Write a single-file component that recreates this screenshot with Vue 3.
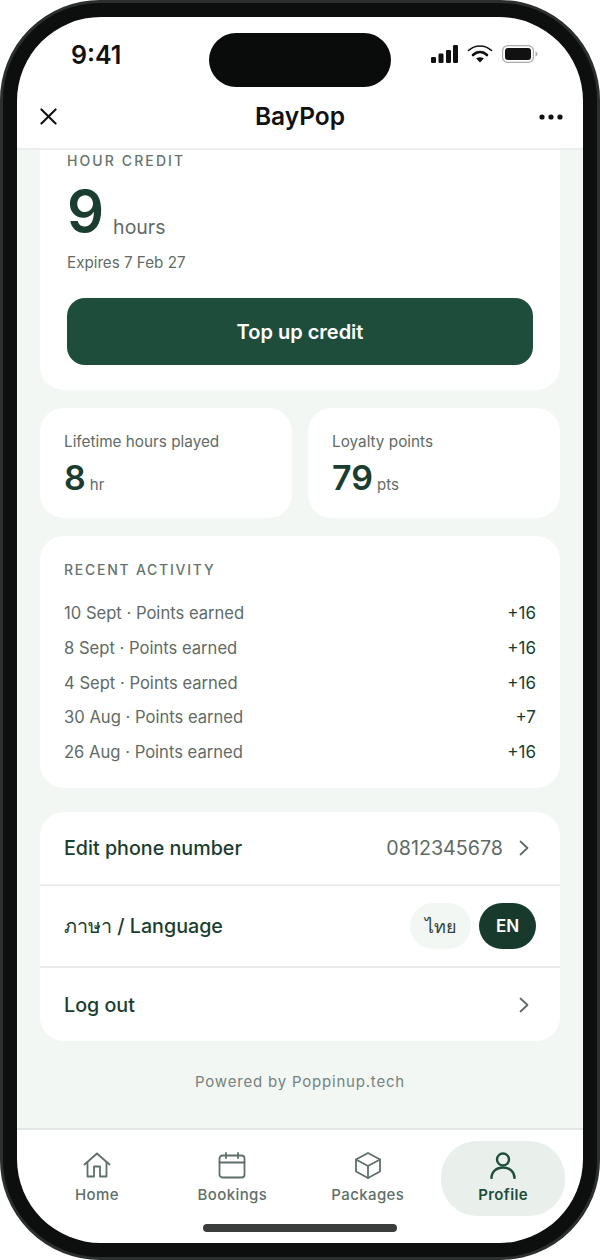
<script setup>
const activity = [
  { label: '10 Sept · Points earned', value: '+16' },
  { label: '8 Sept · Points earned', value: '+16' },
  { label: '4 Sept · Points earned', value: '+16' },
  { label: '30 Aug · Points earned', value: '+7' },
  { label: '26 Aug · Points earned', value: '+16' },
]
</script>

<template>
  <div class="phone">
    <div class="screen">
      <div class="island"></div>

      <div class="status-bar">
        <span class="time">9:41</span>
        <div class="status-icons">
          <svg width="27" height="18" viewBox="0 0 27 18" fill="#111">
            <rect x="0" y="12" width="5" height="6" rx="1.2" />
            <rect x="7.5" y="8.5" width="5" height="9.5" rx="1.2" />
            <rect x="15" y="5" width="5" height="13" rx="1.2" />
            <rect x="22" y="0" width="5" height="18" rx="1.2" />
          </svg>
          <svg width="26" height="18" viewBox="0 0 26 18" fill="none" stroke="#111" stroke-linecap="round">
            <path d="M1.5 5.5C8 -0.5 18 -0.5 24.5 5.5" stroke-width="1.6" />
            <path d="M6 10C10 6 16 6 20 10" stroke-width="2.6" />
            <path d="M13 17.5L9.2 13.4C11.5 11.7 14.5 11.7 16.8 13.4Z" fill="#111" stroke="none" />
          </svg>
          <svg width="36" height="18" viewBox="0 0 36 18" fill="none">
            <rect x="0.6" y="0.6" width="30.8" height="16.8" rx="5" stroke="#aaa" stroke-width="1.2" />
            <rect x="3" y="3" width="26" height="12" rx="3" fill="#111" />
            <path d="M33.5 6.5c1.4.4 2 1.4 2 2.5s-.6 2.1-2 2.5z" fill="#aaa" />
          </svg>
        </div>
      </div>

      <header class="top-bar">
        <svg class="close" width="17" height="17" viewBox="0 0 18 18" fill="none" stroke="#111" stroke-width="2.2" stroke-linecap="round">
          <path d="M1.5 1.5L16.5 16.5M16.5 1.5L1.5 16.5" />
        </svg>
        <h1>BayPop</h1>
        <svg class="more" width="24" height="6" viewBox="0 0 24 6" fill="#111">
          <circle cx="3" cy="3" r="2.6" />
          <circle cx="12" cy="3" r="2.6" />
          <circle cx="21" cy="3" r="2.6" />
        </svg>
      </header>

      <main class="content">
        <section class="card credit">
          <div class="eyebrow credit-title">HOUR CREDIT</div>
          <div class="credit-amount"><strong>9</strong><span>hours</span></div>
          <div class="expires">Expires 7 Feb 27</div>
          <button class="top-up">Top up credit</button>
        </section>

        <div class="stats">
          <section class="card stat">
            <div class="stat-label">Lifetime hours played</div>
            <div class="stat-value"><strong>8</strong><span>hr</span></div>
          </section>
          <section class="card stat">
            <div class="stat-label">Loyalty points</div>
            <div class="stat-value"><strong>79</strong><span>pts</span></div>
          </section>
        </div>

        <section class="card activity">
          <div class="eyebrow">RECENT ACTIVITY</div>
          <div class="activity-list">
            <div v-for="item in activity" :key="item.label" class="activity-row">
              <span>{{ item.label }}</span>
              <b>{{ item.value }}</b>
            </div>
          </div>
        </section>

        <section class="card settings">
          <div class="setting phone-row">
            <span class="setting-name">Edit phone number</span>
            <span class="setting-value">0812345678</span>
            <svg class="chevron" width="10" height="16" viewBox="0 0 10 16" fill="none" stroke="#5f6b66" stroke-width="1.8" stroke-linecap="round" stroke-linejoin="round">
              <path d="M1.5 1.5L8.5 8L1.5 14.5" />
            </svg>
          </div>
          <div class="setting lang-row">
            <span class="setting-name">ภาษา / Language</span>
            <div class="lang-switch">
              <span class="lang">ไทย</span>
              <span class="lang on">EN</span>
            </div>
          </div>
          <div class="setting logout-row">
            <span class="setting-name">Log out</span>
            <svg class="chevron" width="10" height="16" viewBox="0 0 10 16" fill="none" stroke="#5f6b66" stroke-width="1.8" stroke-linecap="round" stroke-linejoin="round">
              <path d="M1.5 1.5L8.5 8L1.5 14.5" />
            </svg>
          </div>
        </section>

        <footer class="powered">Powered by Poppinup.tech</footer>
      </main>

      <nav class="tabs">
        <div class="tab">
          <svg width="28" height="27" viewBox="0 0 28 27" fill="none" stroke="#5f6f69" stroke-width="1.8" stroke-linejoin="round" stroke-linecap="round">
            <path d="M1.5 12.5L14 1.5L26.5 12.5" />
            <path d="M4.5 10.5V24.5H11V14.5H17V24.5H23.5V10.5" />
          </svg>
          <span>Home</span>
        </div>
        <div class="tab">
          <svg width="28" height="27" viewBox="0 0 28 27" fill="none" stroke="#5f6f69" stroke-width="1.8" stroke-linecap="round">
            <rect x="1.5" y="3.5" width="25" height="22" rx="3" />
            <path d="M1.5 10.5H26.5M8 1V6M20 1V6" />
          </svg>
          <span>Bookings</span>
        </div>
        <div class="tab">
          <svg width="28" height="27" viewBox="0 0 28 27" fill="none" stroke="#5f6f69" stroke-width="1.8" stroke-linejoin="round" stroke-linecap="round">
            <path d="M14 1L26 7.5V19.5L14 26L2 19.5V7.5Z" />
            <path d="M2 7.5L14 14L26 7.5M14 14V26" />
          </svg>
          <span>Packages</span>
        </div>
        <div class="tab active">
          <svg width="26" height="27" viewBox="0 0 26 27" fill="none" stroke="#1f4d3c" stroke-width="2.4" stroke-linecap="round">
            <circle cx="13" cy="7.5" r="6" />
            <path d="M1.5 26C1.5 19.5 6.5 15.5 13 15.5C19.5 15.5 24.5 19.5 24.5 26" />
          </svg>
          <span>Profile</span>
        </div>
      </nav>

      <div class="home-bar"></div>
    </div>
  </div>
</template>

<style>
html,
body {
  margin: 0;
  background: #fff;
}
</style>

<style scoped>
.phone {
  width: 600px;
  height: 1260px;
  box-sizing: border-box;
  padding: 14px;
  border: 3px solid #2b2f2d;
  border-radius: 100px;
  background: #0d0f0e;
  font-family: Inter, "Noto Sans", sans-serif;
  overflow: hidden;
}

.screen {
  position: relative;
  height: 100%;
  display: flex;
  flex-direction: column;
  border-radius: 84px;
  background: #fff;
  overflow: hidden;
}

.island {
  position: absolute;
  top: 16px;
  left: 192px;
  width: 182px;
  height: 54px;
  border-radius: 27px;
  background: #0a0b0b;
}

.status-bar {
  height: 70px;
  flex: none;
  display: flex;
  justify-content: space-between;
  align-items: center;
  padding: 5px 45px 0 54px;
  box-sizing: border-box;
}

.time {
  font-size: 25px;
  font-weight: 600;
  color: #111;
}

.status-icons {
  display: flex;
  align-items: center;
  gap: 9px;
  margin-top: -2px;
}

.top-bar {
  height: 61px;
  flex: none;
  display: flex;
  justify-content: space-between;
  align-items: center;
  padding: 0 20px 0 23px;
  border-bottom: 2px solid #eceeed;
}

.top-bar h1 {
  margin: 0 0 4px 4px;
  font-size: 24.5px;
  font-weight: 600;
  color: #111;
}

.close,
.more {
  margin-bottom: 2px;
}

.content {
  flex: 1;
  min-height: 0;
  overflow: hidden;
  padding: 0 23px;
  background: #f2f7f4;
}

.card {
  background: #fff;
  border-radius: 24px;
}

.credit {
  height: 240px;
  box-sizing: border-box;
  padding: 2px 27px 0;
  border-radius: 0 0 24px 24px;
}

.eyebrow {
  font-size: 14px;
  font-weight: 500;
  letter-spacing: 1.75px;
  line-height: 17px;
  color: #66736e;
}

.credit-title {
  letter-spacing: 2.1px;
}

.credit-amount {
  display: flex;
  align-items: flex-end;
  margin-top: 9px;
  height: 66px;
}

.credit-amount strong {
  font-size: 58px;
  line-height: 66px;
  font-weight: 600;
  color: #1a3d2f;
}

.credit-amount span {
  margin: 0 0 5px 9px;
  font-size: 19.5px;
  line-height: 24px;
  color: #5f6b66;
}

.expires {
  margin-top: 8px;
  font-size: 15.2px;
  line-height: 22px;
  color: #5f6b66;
}

.top-up {
  display: block;
  width: 100%;
  height: 67px;
  margin-top: 24px;
  border: none;
  border-radius: 18px;
  background: #1f4d3c;
  color: #fff;
  font-family: inherit;
  font-size: 20px;
  font-weight: 600;
}

.stats {
  display: grid;
  grid-template-columns: 252px 252px;
  gap: 16px;
  margin-top: 18px;
}

.stat {
  height: 110px;
  box-sizing: border-box;
  padding: 24px 24px 0;
}

.stat-label {
  font-size: 15.3px;
  line-height: 20px;
  color: #5f6b66;
}

.stat-value {
  display: flex;
  align-items: baseline;
  margin-top: 5px;
}

.stat-value strong {
  font-size: 34px;
  line-height: 42px;
  font-weight: 600;
  color: #1a3d2f;
}

.stat-value span {
  margin-left: 4px;
  font-size: 15px;
  color: #5f6b66;
}

.activity {
  height: 252px;
  box-sizing: border-box;
  margin-top: 18px;
  padding: 25px 24px 0;
}

.activity-list {
  margin-top: 18px;
}

.activity-row {
  display: flex;
  justify-content: space-between;
  height: 34.7px;
  align-items: center;
  font-size: 16.6px;
  color: #5f6b66;
}

.activity-row b {
  font-size: 17px;
  font-weight: 400;
  color: #1a3d2f;
}

.settings {
  margin-top: 24px;
  height: 229px;
  overflow: hidden;
}

.setting {
  display: flex;
  align-items: center;
  padding: 0 24px;
  box-sizing: border-box;
}

.phone-row {
  height: 74px;
  border-bottom: 2px solid #e9ecea;
}

.lang-row {
  height: 82px;
  justify-content: space-between;
  border-bottom: 2px solid #e9ecea;
}

.logout-row {
  height: 73px;
  justify-content: space-between;
}

.setting-name {
  font-size: 19.7px;
  font-weight: 500;
  color: #1a3d2f;
}

.setting-value {
  margin-left: auto;
  font-size: 19.7px;
  color: #5f6b66;
}

.chevron {
  margin: 0 7px 0 16px;
}

.lang-switch {
  display: flex;
  gap: 8px;
}

.lang {
  display: flex;
  align-items: center;
  justify-content: center;
  width: 61px;
  height: 46px;
  border-radius: 23px;
  background: #f2f7f4;
  color: #33423c;
  font-size: 18px;
  font-weight: 500;
}

.lang.on {
  width: 57px;
  background: #173a2c;
  color: #fff;
  font-size: 17px;
  font-weight: 600;
}

.powered {
  margin-top: 31px;
  text-align: center;
  font-size: 15px;
  letter-spacing: 0.8px;
  color: #76827d;
}

.tabs {
  height: 115px;
  flex: none;
  display: grid;
  grid-template-columns: repeat(4, 124px);
  gap: 11.4px;
  padding: 11px 0 0 18px;
  box-sizing: border-box;
  border-top: 2px solid #e2e6e4;
}

.tab {
  height: 75px;
  display: flex;
  flex-direction: column;
  align-items: center;
  justify-content: flex-start;
  padding-top: 11px;
  box-sizing: border-box;
  gap: 6px;
  color: #5f6f69;
  font-size: 15px;
  font-weight: 500;
  letter-spacing: 0.4px;
  border-radius: 36px;
}

.tab.active {
  background: #e9efeb;
  color: #1f4d3c;
  font-weight: 600;
}

.home-bar {
  position: absolute;
  bottom: 11px;
  left: 186px;
  width: 194px;
  height: 8px;
  border-radius: 4px;
  background: #3a3d3c;
}
</style>
